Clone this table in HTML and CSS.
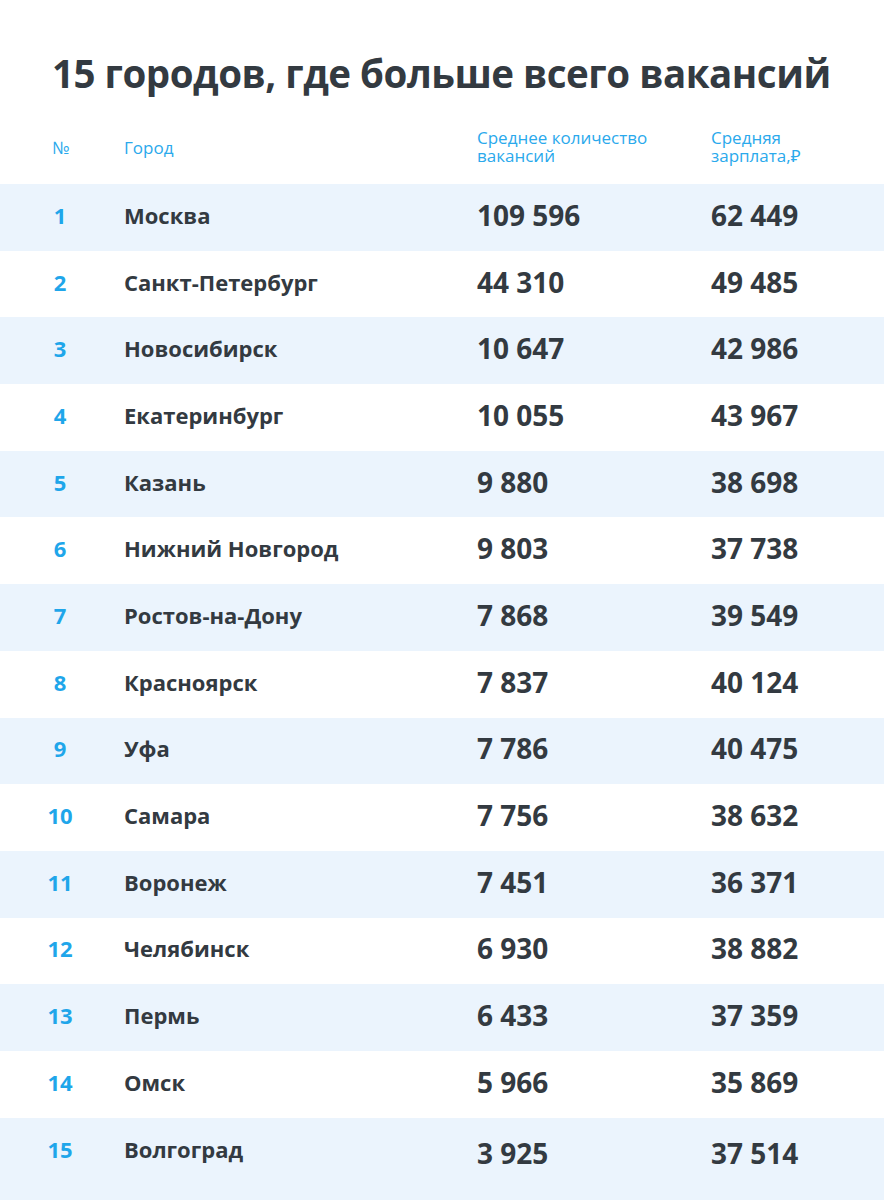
FILE: index.html
```html
<!DOCTYPE html>
<html lang="ru">
<head>
<meta charset="utf-8">
<title>15 городов, где больше всего вакансий</title>
<link rel="stylesheet" href="styles.css">
</head>
<body>
<div class="page">
  <h1 class="title">15 городов, где больше всего вакансий</h1>
  <div class="table">
    <div class="row head">
      <div class="num">№</div>
      <div class="city">Город</div>
      <div class="val"><div class="hl">Среднее количество</div><div class="hl">вакансий</div></div>
      <div class="val"><div class="hl">Средняя</div><div class="hl">зарплата,₽</div></div>
    </div>
    <div class="row alt"><div class="num">1</div><div class="city">Москва</div><div class="val">109 596</div><div class="val">62 449</div></div>
    <div class="row"><div class="num">2</div><div class="city">Санкт-Петербург</div><div class="val">44 310</div><div class="val">49 485</div></div>
    <div class="row alt"><div class="num">3</div><div class="city">Новосибирск</div><div class="val">10 647</div><div class="val">42 986</div></div>
    <div class="row"><div class="num">4</div><div class="city">Екатеринбург</div><div class="val">10 055</div><div class="val">43 967</div></div>
    <div class="row alt"><div class="num">5</div><div class="city">Казань</div><div class="val">9 880</div><div class="val">38 698</div></div>
    <div class="row"><div class="num">6</div><div class="city">Нижний Новгород</div><div class="val">9 803</div><div class="val">37 738</div></div>
    <div class="row alt"><div class="num">7</div><div class="city">Ростов-на-Дону</div><div class="val">7 868</div><div class="val">39 549</div></div>
    <div class="row"><div class="num">8</div><div class="city">Красноярск</div><div class="val">7 837</div><div class="val">40 124</div></div>
    <div class="row alt"><div class="num">9</div><div class="city">Уфа</div><div class="val">7 786</div><div class="val">40 475</div></div>
    <div class="row"><div class="num">10</div><div class="city">Самара</div><div class="val">7 756</div><div class="val">38 632</div></div>
    <div class="row alt"><div class="num">11</div><div class="city">Воронеж</div><div class="val">7 451</div><div class="val">36 371</div></div>
    <div class="row"><div class="num">12</div><div class="city">Челябинск</div><div class="val">6 930</div><div class="val">38 882</div></div>
    <div class="row alt"><div class="num">13</div><div class="city">Пермь</div><div class="val">6 433</div><div class="val">37 359</div></div>
    <div class="row"><div class="num">14</div><div class="city">Омск</div><div class="val">5 966</div><div class="val">35 869</div></div>
    <div class="row alt last"><div class="num">15</div><div class="city">Волгоград</div><div class="val">3 925</div><div class="val">37 514</div></div>
  </div>
</div>
</body>
</html>
```

FILE: styles.css
```css
html, body {
  margin: 0;
  padding: 0;
  background: #ffffff;
}
body {
  font-family: "Open Sans", "Noto Sans", sans-serif;
  color: #333a41;
  width: 884px;
  height: 1200px;
  overflow: hidden;
}
.title {
  margin: 0;
  padding: 49px 0 0 52px;
  font-size: 38.5px;
  line-height: 48px;
  font-weight: 700;
  letter-spacing: -0.48px;
  color: #333a41;
}
.table {
  margin-top: 23px;
}
.row {
  display: grid;
  grid-template-columns: 104px 353px 234px 1fr;
  align-items: center;
  padding-left: 20px;
  padding-bottom: 5px;
  box-sizing: border-box;
  height: 66.7px;
}
.row.alt {
  background: #ebf4fd;
}
.row.last {
  height: 82px;
  align-items: start;
  padding-bottom: 0;
}
.row.last > div {
  margin-top: 16px;
}
.num {
  width: 80px;
  text-align: center;
  font-size: 22px;
  font-weight: 700;
  color: #1fa6ea;
}
.city {
  font-size: 22px;
  font-weight: 700;
}
.val {
  font-size: 28px;
  font-weight: 700;
}
.row.head {
  height: 64px;
  padding-bottom: 10px;
  color: #2aa9ec;
}
.row.head > div {
  font-size: 17px;
  line-height: 19px;
  font-weight: 400;
  color: #2aa9ec;
}
.row.head .hl {
  height: 18.5px;
  line-height: 18.5px;
}
.row.head .num {
  text-align: left;
  padding-left: 32px;
  box-sizing: border-box;
}
```
